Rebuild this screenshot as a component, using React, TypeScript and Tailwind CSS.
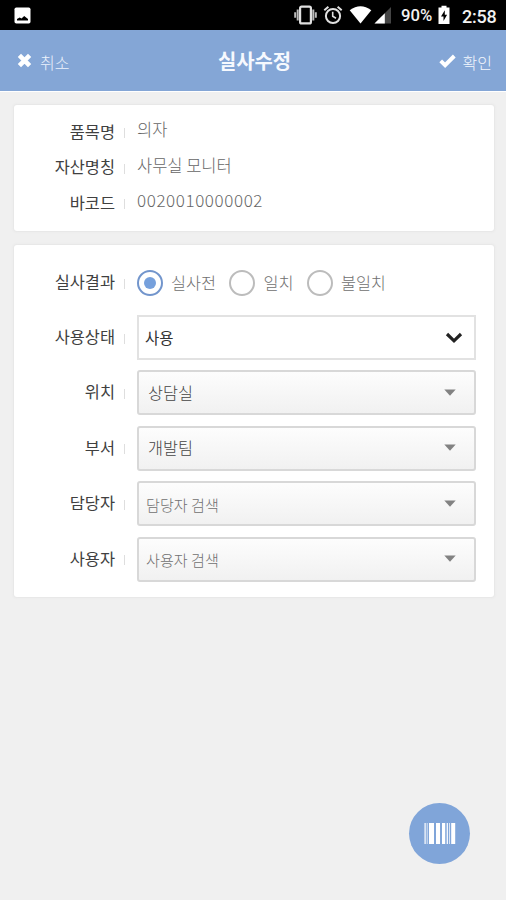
import type { ReactNode } from "react"

const details = [
  { label: "품목명", value: "의자", size: "text-[16.5px]" },
  { label: "자산명칭", value: "사무실 모니터", size: "text-[16.5px]" },
  { label: "바코드", value: "0020010000002", size: "text-[17px] tracking-[0.6px]" },
]

const results = [
  { label: "실사전", checked: true },
  { label: "일치", checked: false },
  { label: "불일치", checked: false },
]

const pickers = [
  { label: "위치", value: "상담실", filled: true },
  { label: "부서", value: "개발팀", filled: true },
  { label: "담당자", value: "담당자 검색", filled: false },
  { label: "사용자", value: "사용자 검색", filled: false },
]

function StatusBar() {
  return (
    <div className="flex h-[30px] items-center bg-black pl-[14px] pr-[9px] font-['Roboto',sans-serif] text-[#f2f2f2]">
      <svg className="h-[17px] w-[17px]" viewBox="0 0 17 17">
        <rect x="0.5" y="0.5" width="16" height="16" rx="1.8" fill="#fff" />
        <path d="M3 13.5 V12 L5.7 10.5 L7.5 11.6 L10.2 9 L14 12 V13.5 Z" fill="#000" />
      </svg>
      <div className="ml-auto flex items-center">
        <svg className="h-[20px] w-[23px]" viewBox="0 0 23 20">
          <rect x="6.1" y="1.6" width="10.8" height="16.8" rx="1.5" fill="none" stroke="#e0e0e0" strokeWidth="2.2" />
          <path d="M3.7 4.5 V15.5 M19.3 4.5 V15.5" stroke="#bcbcbc" strokeWidth="2" />
          <path d="M1.2 7.2 V12.8 M21.8 7.2 V12.8" stroke="#bcbcbc" strokeWidth="2" />
        </svg>
        <svg className="ml-[6px] h-[20px] w-[20px]" viewBox="0 0 20 20" fill="none" stroke="#e0e0e0">
          <circle cx="10" cy="11" r="7.1" strokeWidth="2" />
          <path d="M9.7 6.8 V11.3 L13 13.3" strokeWidth="1.6" />
          <path d="M1.3 5.3 L5.4 1.8 M14.6 1.8 L18.7 5.3" strokeWidth="2" />
        </svg>
        <svg className="ml-[6px] h-[18px] w-[23px]" viewBox="0 0 23 18">
          <path d="M0.7 4.2 Q11.5 -3.6 22.3 4.2 L11.5 17.6 Z" fill="#fff" />
        </svg>
        <svg className="ml-[2px] h-[18px] w-[18px]" viewBox="0 0 18 18">
          <path d="M17 1 V17.5 H0.5 Z" fill="#454545" />
          <path d="M10.8 7.2 V17.5 H0.5 Z" fill="#fff" />
        </svg>
        <span className="ml-[9px] w-[32px] whitespace-nowrap pt-[3px] text-[16.7px] font-medium leading-none">90%</span>
        <svg className="ml-[5px] h-[20px] w-[12px]" viewBox="0 0 12 20">
          <path d="M3.5 0.8 H8.5 V2.5 H11.5 V19 H0.5 V2.5 H3.5 Z" fill="#fff" />
          <path d="M6.8 5.3 L3 11.6 H5.5 V16 L9.1 9.7 H6.8 Z" fill="#000" />
        </svg>
        <span className="ml-[12px] w-[35px] whitespace-nowrap pt-[3px] text-[18px] font-medium leading-none tracking-[-0.2px]">2:58</span>
      </div>
    </div>
  )
}

function Header() {
  return (
    <header className="grid h-[62px] grid-cols-3 items-center border-b border-white bg-[#84a6d6] pl-[17px] pr-[14px] text-white">
      <button className="flex items-center gap-[8px]">
        <svg className="h-[15px] w-[15px]" viewBox="0 0 15 15">
          <path d="M2.4 2.4 L12.6 12.6 M12.6 2.4 L2.4 12.6" stroke="#fff" strokeWidth="4.6" />
        </svg>
        <span className="pt-[2px] text-[16px] font-light leading-[22px] text-[#edf3fc]">취소</span>
      </button>
      <h1 className="text-center text-[19.9px] font-bold leading-[26px] text-[#f6f9fe]">실사수정</h1>
      <button className="flex items-center justify-end gap-[7px]">
        <svg className="h-[14px] w-[17px]" viewBox="0 0 17 14">
          <path d="M1.7 6.9 L6.1 11.2 L15.3 2" fill="none" stroke="#fff" strokeWidth="3.9" />
        </svg>
        <span className="pt-[2px] text-[16px] font-light leading-[22px] text-[#f2f6fd]">확인</span>
      </button>
    </header>
  )
}

function Row({ label, className, children }: { label: string; className: string; children: ReactNode }) {
  return (
    <div className={`flex items-center ${className}`}>
      <div className="-mt-[3px] w-[101px] shrink-0 text-right text-[16.4px] leading-[24px] text-[#404040]">{label}</div>
      <div className="ml-[9px] mr-[12px] mt-[2px] h-[10px] w-px shrink-0 bg-[#dedede]" />
      {children}
    </div>
  )
}

export default function App() {
  return (
    <div className="relative h-[900px] w-[506px] overflow-hidden bg-[#f0f0f0] font-['Noto_Sans_CJK_KR',sans-serif]">
      <StatusBar />
      <Header />

      <main className="flex flex-col gap-[14px] pl-[14px] pr-[12px] pt-[13px]">
        <section className="h-[126px] rounded-[3px] bg-white pt-[9.5px] shadow-[0_0_2px_1px_#e6e6e6]">
          {details.map((d) => (
            <Row key={d.label} label={d.label} className="h-[35.6px]">
              <span className={`-mt-[6px] font-light leading-[24px] text-[#666] ${d.size}`}>{d.value}</span>
            </Row>
          ))}
        </section>

        <section className="flex h-[352px] flex-col rounded-[3px] bg-white pr-[18.5px] pt-[15px] shadow-[0_0_2px_1px_#e6e6e6]">
          <Row label="실사결과" className="mb-[10px] h-[45px]">
            <div className="flex items-center">
              {results.map((r) => (
                <label key={r.label} className="mr-[13.5px] flex items-center gap-[8px]">
                  <span className={`flex h-[26px] w-[26px] items-center justify-center rounded-full border-2 ${r.checked ? "border-[#7295cc]" : "border-[#bcbcbc]"}`}>
                    {r.checked && <span className="h-[12px] w-[12px] rounded-full bg-[#76a0dc]" />}
                  </span>
                  <span className="-mt-[2px] text-[16.3px] font-light leading-[24px] text-[#707070]">{r.label}</span>
                </label>
              ))}
            </div>
          </Row>

          <div className="flex flex-col gap-[10.4px]">
            <Row label="사용상태" className="h-[45px]">
              <button className="flex h-full flex-1 items-center justify-between border-2 border-[#e2e2e2] bg-white pl-[6px] pr-[10.5px]">
                <span className="-mt-[2px] text-[15.5px] leading-[24px] text-[#333]">사용</span>
                <svg className="h-[12px] w-[18px]" viewBox="0 0 18 12">
                  <path d="M2 2 L9 8.8 L16 2" fill="none" stroke="#222" strokeWidth="3.2" />
                </svg>
              </button>
            </Row>
            {pickers.map((p) => (
              <Row key={p.label} label={p.label} className="h-[45px]">
                <button className={`flex h-full flex-1 items-center justify-between rounded-[3px] border-2 border-[#d8d8d8] bg-linear-to-b from-[#fdfdfd] to-[#f1f1f1] pr-[17.5px] ${p.filled ? "pl-[9px]" : "pl-[7px]"}`}>
                  <span className={p.filled ? "-mt-[2px] text-[16.3px] font-light leading-[24px] text-[#444]" : "text-[15.1px] font-light leading-[24px] text-[#707070]"}>
                    {p.value}
                  </span>
                  <svg className="-mt-[1px] h-[7px] w-[12px]" viewBox="0 0 12 7">
                    <path d="M0.3 0.5 H11.7 L6 6.8 Z" fill="#828282" />
                  </svg>
                </button>
              </Row>
            ))}
          </div>
        </section>
      </main>

      {/* Floating scan button */}
      <button className="absolute bottom-[36px] right-[36px] flex h-[61px] w-[61px] items-center justify-center rounded-full bg-[#80a5d9]">
        <svg className="h-[21px] w-[32px]" viewBox="0 0 32 21" fill="#fff">
          <rect x="0.5" width="1.2" height="21" />
          <rect x="2.7" width="1" height="21" opacity="0.7" />
          <rect x="5" width="5" height="21" />
          <rect x="12" width="4" height="21" />
          <rect x="18" width="3.2" height="21" />
          <rect x="22.7" width="1.2" height="21" />
          <rect x="25" width="1" height="21" opacity="0.7" />
          <rect x="27.2" width="4" height="21" />
        </svg>
      </button>
    </div>
  )
}
